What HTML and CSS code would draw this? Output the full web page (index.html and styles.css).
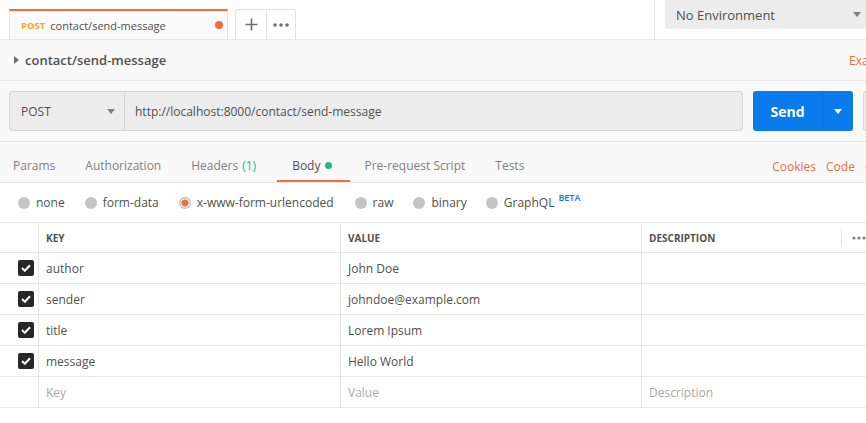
FILE: index.html
```html
<!DOCTYPE html>
<html>
<head>
<meta charset="utf-8">
<link rel="stylesheet" href="styles.css">
</head>
<body>
<div class="topbar">
  <div class="tabs">
    <div class="tab">
      <span class="tab-method">POST</span>
      <span class="tab-name">contact/send-message</span>
      <span class="tab-dot"></span>
    </div>
    <div class="tab-actions">
      <div class="tab-act">
        <svg width="13" height="13" viewBox="0 0 13 13"><path d="M6.5 0.5v12M0.5 6.5h12" stroke="#707070" stroke-width="1.6" fill="none"/></svg>
      </div>
      <div class="tab-act">
        <svg width="16" height="4" viewBox="0 0 16 4"><circle cx="2" cy="2" r="1.8" fill="#707070"/><circle cx="8" cy="2" r="1.8" fill="#707070"/><circle cx="14" cy="2" r="1.8" fill="#707070"/></svg>
      </div>
    </div>
  </div>
  <div class="env-wrap">
    <div class="env">
      <span>No Environment</span>
      <svg class="caret" width="8" height="5" viewBox="0 0 8 5"><path d="M0 0h8L4 5z" fill="#808080"/></svg>
    </div>
  </div>
</div>

<div class="titlebar">
  <svg class="tri" width="5" height="8" viewBox="0 0 5 8"><path d="M0 0l5 4-5 4z" fill="#707070"/></svg>
  <span class="title">contact/send-message</span>
  <span class="examples">Examples (0)</span>
</div>

<div class="request">
  <div class="method">
    <span>POST</span>
    <svg width="8" height="5" viewBox="0 0 8 5"><path d="M0 0h8L4 5z" fill="#808080"/></svg>
  </div>
  <div class="url">http://localhost:8000/contact/send-message</div>
  <div class="send">
    <span class="send-label">Send</span>
    <span class="send-drop"><svg width="8" height="5" viewBox="0 0 8 5"><path d="M0 0h8L4 5z" fill="#fff"/></svg></span>
  </div>
  <div class="save"></div>
</div>

<div class="reqtabs">
  <span class="rt">Params</span>
  <span class="rt">Authorization</span>
  <span class="rt">Headers <span class="green">(1)</span></span>
  <span class="rt active">Body <span class="gdot"></span></span>
  <span class="rt">Pre-request Script</span>
  <span class="rt">Tests</span>
  <span class="spacer"></span>
  <span class="rt-link">Cookies</span>
  <span class="rt-link">Code</span>
  <span class="rt-link">Comments</span>
</div>

<div class="radios">
  <span class="radio"><span class="circ"></span>none</span>
  <span class="radio"><span class="circ"></span>form-data</span>
  <span class="radio"><span class="circ on"></span>x-www-form-urlencoded</span>
  <span class="radio"><span class="circ"></span>raw</span>
  <span class="radio"><span class="circ"></span>binary</span>
  <span class="radio"><span class="circ"></span>GraphQL<sup class="beta">BETA</sup></span>
</div>

<div class="kv">
  <div class="row head">
    <div class="c chk"></div>
    <div class="c key">KEY</div>
    <div class="c val">VALUE</div>
    <div class="c desc-h">DESCRIPTION</div>
    <div class="c more"><svg width="14" height="4" viewBox="0 0 14 4"><circle cx="2" cy="2" r="1.6" fill="#808080"/><circle cx="7" cy="2" r="1.6" fill="#808080"/><circle cx="12" cy="2" r="1.6" fill="#808080"/></svg></div>
  </div>
  <div class="row">
    <div class="c chk"><span class="box"><svg width="10" height="8" viewBox="0 0 10 8"><path d="M1 4l2.8 2.8L9 1.2" stroke="#fff" stroke-width="2" fill="none"/></svg></span></div>
    <div class="c key">author</div>
    <div class="c val">John Doe</div>
    <div class="c desc"></div>
  </div>
  <div class="row">
    <div class="c chk"><span class="box"><svg width="10" height="8" viewBox="0 0 10 8"><path d="M1 4l2.8 2.8L9 1.2" stroke="#fff" stroke-width="2" fill="none"/></svg></span></div>
    <div class="c key">sender</div>
    <div class="c val">johndoe@example.com</div>
    <div class="c desc"></div>
  </div>
  <div class="row">
    <div class="c chk"><span class="box"><svg width="10" height="8" viewBox="0 0 10 8"><path d="M1 4l2.8 2.8L9 1.2" stroke="#fff" stroke-width="2" fill="none"/></svg></span></div>
    <div class="c key">title</div>
    <div class="c val">Lorem Ipsum</div>
    <div class="c desc"></div>
  </div>
  <div class="row">
    <div class="c chk"><span class="box"><svg width="10" height="8" viewBox="0 0 10 8"><path d="M1 4l2.8 2.8L9 1.2" stroke="#fff" stroke-width="2" fill="none"/></svg></span></div>
    <div class="c key">message</div>
    <div class="c val">Hello World</div>
    <div class="c desc"></div>
  </div>
  <div class="row ph">
    <div class="c chk"></div>
    <div class="c key">Key</div>
    <div class="c val">Value</div>
    <div class="c desc">Description</div>
  </div>
</div>
</body>
</html>
```

FILE: styles.css
```css
* { box-sizing: border-box; }
html, body { margin: 0; padding: 0; }
body {
  width: 866px;
  height: 423px;
  overflow: hidden;
  background: #fff;
  font-family: "Open Sans", "Noto Sans", sans-serif;
  color: #505050;
}

.topbar {
  display: flex;
  height: 40px;
  border-bottom: 1px solid #e6e6e6;
  background: #fff;
}
.tabs {
  flex: 1;
  display: flex;
  align-items: flex-end;
  padding-left: 9px;
}
.tab {
  width: 219px;
  height: 30px;
  border: 1px solid #e2e2e2;
  border-top: 2px solid #f26b3a;
  border-bottom: none;
  background: #fafafa;
  display: flex;
  align-items: center;
  padding-left: 11px;
  padding-right: 5px;
  font-size: 11px;
}
.tab-method {
  color: #f5a623;
  font-weight: 700;
  font-size: 9.5px;
  margin-right: 5px;
}
.tab-name { color: #505050; flex: 1; }
.tab-dot {
  width: 8px; height: 8px; border-radius: 50%;
  background: #f26b3a;
  margin-right: -1px;
}
.tab-actions {
  margin-left: 7px;
  height: 30px;
  display: flex;
  border: 1px solid #e2e2e2;
  border-bottom: none;
  border-radius: 3px 3px 0 0;
}
.tab-act {
  width: 30px;
  display: flex;
  align-items: center;
  justify-content: center;
}
.tab-act + .tab-act { border-left: 1px solid #e2e2e2; width: 29px; }

.env-wrap {
  width: 212px;
  flex-shrink: 0;
  border-left: 1px solid #e6e6e6;
  padding-left: 10px;
}
.env {
  height: 29px;
  background: #ececec;
  border-radius: 0 0 0 3px;
  display: flex;
  align-items: center;
  padding-left: 11px;
  font-size: 13px;
  color: #505050;
  width: 210px;
}
.env span { flex: 1; }
.env .caret { margin-right: 14px; }

.titlebar {
  height: 41px;
  background: #f9f9f9;
  border-bottom: 1px solid #e6e6e6;
  display: flex;
  align-items: center;
  padding-left: 14px;
  white-space: nowrap;
  overflow: hidden;
}
.tri { margin-right: 6px; }
.title {
  font-size: 13px;
  font-weight: 600;
  color: #505050;
  flex: 1;
}
.examples {
  font-size: 12px;
  color: #f26b3a;
  margin-right: -60px;
  width: 77px;
  flex-shrink: 0;
}

.request {
  display: flex;
  background: #f9f9f9;
  padding: 10px 0 10px 9px;
  height: 61px;
  border-bottom: 1px solid #e6e6e6;
  overflow: hidden;
}
.request > div { flex-shrink: 0; }
.method {
  width: 115px;
  height: 40px;
  background: #ececec;
  border: 1px solid #d6d6d6;
  border-right: none;
  border-radius: 3px 0 0 3px;
  display: flex;
  align-items: center;
  padding-left: 11px;
  padding-right: 9px;
  font-size: 12px;
  color: #505050;
}
.method span { flex: 1; }
.url {
  width: 619px;
  height: 40px;
  background: #ececec;
  border: 1px solid #d6d6d6;
  border-radius: 0 3px 3px 0;
  display: flex;
  align-items: center;
  padding-left: 10px;
  font-size: 12px;
  color: #505050;
}
.send {
  margin-left: 10px;
  width: 100px;
  height: 40px;
  background: #097bed;
  border-radius: 3px;
  display: flex;
  color: #fff;
}
.send-label {
  width: 70px;
  display: flex;
  align-items: center;
  justify-content: center;
  font-weight: 700;
  font-size: 14px;
  border-right: 1px solid #0a6ed3;
}
.send-drop {
  flex: 1;
  display: flex;
  align-items: center;
  justify-content: center;
}
.save {
  margin-left: 10px;
  width: 40px;
  height: 40px;
  background: #ececec;
  border: 1px solid #d6d6d6;
  border-radius: 3px;
}

.reqtabs {
  display: flex;
  align-items: stretch;
  height: 41px;
  background: #f9f9f9;
  border-bottom: 1px solid #e6e6e6;
  padding-left: 1px;
  font-size: 12px;
  white-space: nowrap;
  overflow: hidden;
}
.rt {
  display: flex;
  align-items: center;
  padding: 8px 12px 0 12px;
  margin-right: 6px;
  color: #808080;
  border-bottom: 2px solid transparent;
}
.rt.active {
  color: #505050;
  border-bottom-color: #f26b3a;
  padding: 8px 18px 0 15px;
  margin-right: 2px;
  margin-left: 3px;
}
.green { color: #26b47f; margin-left: 4px; }
.gdot {
  width: 7px; height: 7px; border-radius: 50%;
  background: #26b47f;
  margin-left: 5px;
}
.spacer { flex: 1; }
.rt-link {
  display: flex;
  align-items: center;
  color: #f26b3a;
  margin-left: 10px;
  font-size: 12px;
  padding-top: 8px;
}
.rt-link:last-child { margin-right: -60px; }

.radios {
  height: 40px;
  display: flex;
  align-items: center;
  padding-left: 18px;
  font-size: 12px;
  color: #505050;
  border-bottom: 1px solid #e6e6e6;
}
.radio {
  display: flex;
  align-items: center;
  margin-right: 20px;
}
.radio:nth-child(3) { margin-right: 21px; }
.radio:nth-child(4) { margin-right: 20px; }
.radio:nth-child(5) { margin-right: 19px; }
.circ {
  width: 12px; height: 12px; border-radius: 50%;
  background: #c4c4c4;
  margin-right: 6px;
}
.circ.on {
  background: radial-gradient(circle, #f26b3a 0 3.3px, #e8e8e8 3.8px 4.3px, #c4c4c4 4.8px);
}
.beta {
  color: #097bed;
  font-size: 9px;
  font-weight: 600;
  margin-left: 4px;
  position: relative;
  top: -5px;
  vertical-align: baseline;
}

.kv { font-size: 12px; }
.row {
  display: flex;
  height: 31px;
  border-bottom: 1px solid #e6e6e6;
}
.row.head { height: 30px; }
.c {
  display: flex;
  align-items: center;
  padding-left: 7px;
  border-left: 1px solid #e6e6e6;
  color: #505050;
}
.c.chk {
  width: 38px;
  border-left: none;
  padding-left: 18px;
}
.c.key { width: 302px; }
.c.val { width: 301px; }
.c.desc { flex: 1; }
.c.desc-h { width: 200px; }
.head .c {
  font-size: 10px;
  font-weight: 700;
  color: #505050;
}
.head .c.more {
  flex: 1;
  border-left: none;
  position: relative;
  padding-left: 11px;
}
.head .c.more::before {
  content: "";
  position: absolute;
  left: 0;
  top: 6px;
  bottom: 6px;
  border-left: 1px solid #e6e6e6;
}
.box {
  width: 16px; height: 16px;
  background: #282828;
  border-radius: 2px;
  display: flex;
  align-items: center;
  justify-content: center;
}
.ph .c { color: #a8a8a8; }
```
